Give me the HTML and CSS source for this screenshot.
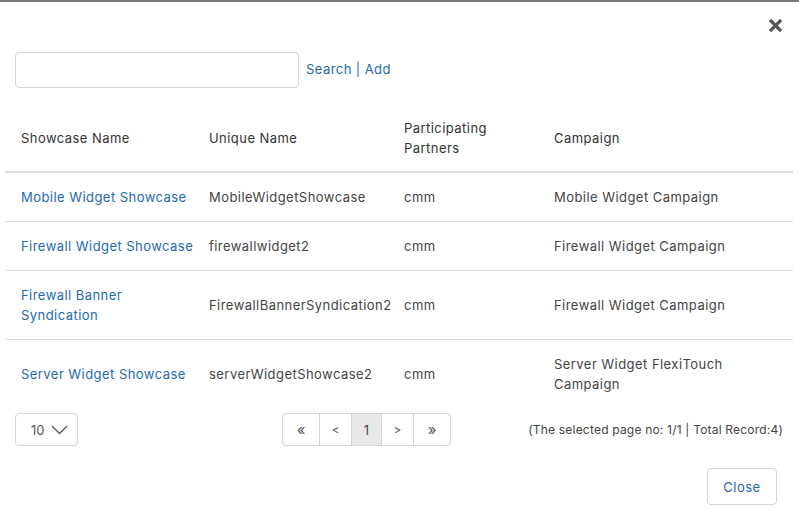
FILE: index.html
```html
<!DOCTYPE html>
<html lang="en">
<head>
    <meta charset="UTF-8">
    <meta name="viewport" content="width=device-width, initial-scale=1.0">
    <title>Showcases</title>
    <link rel="stylesheet" href="styles.css">
</head>
<body>
    <div class="modal">
        <div class="modal-header">
            <button class="close-x" aria-label="Close">
                <svg width="13" height="13" viewBox="0 0 13 13"><path d="M2 2 L11 11 M11 2 L2 11" stroke="#555" stroke-width="3.2" stroke-linecap="square"/></svg>
            </button>
        </div>

        <div class="search-bar">
            <input type="text" class="search-input">
            <a href="#">Search</a><span class="sep">|</span><a href="#">Add</a>
        </div>

        <table>
            <colgroup>
                <col class="c1"><col class="c2"><col class="c3"><col>
            </colgroup>
            <thead>
                <tr>
                    <th>Showcase Name</th>
                    <th>Unique Name</th>
                    <th>Participating<br>Partners</th>
                    <th>Campaign</th>
                </tr>
            </thead>
            <tbody>
                <tr>
                    <td><a href="#">Mobile Widget Showcase</a></td>
                    <td>MobileWidgetShowcase</td>
                    <td>cmm</td>
                    <td>Mobile Widget Campaign</td>
                </tr>
                <tr>
                    <td><a href="#">Firewall Widget Showcase</a></td>
                    <td>firewallwidget2</td>
                    <td>cmm</td>
                    <td>Firewall Widget Campaign</td>
                </tr>
                <tr>
                    <td><a href="#">Firewall Banner<br>Syndication</a></td>
                    <td>FirewallBannerSyndication2</td>
                    <td>cmm</td>
                    <td>Firewall Widget Campaign</td>
                </tr>
                <tr>
                    <td><a href="#">Server Widget Showcase</a></td>
                    <td>serverWidgetShowcase2</td>
                    <td>cmm</td>
                    <td>Server Widget FlexiTouch<br>Campaign</td>
                </tr>
            </tbody>
        </table>

        <div class="pager-row">
            <div class="page-size">10
                <svg width="17" height="10" viewBox="0 0 17 10"><path d="M1 1 L8.5 8.5 L16 1" fill="none" stroke="#555" stroke-width="1.3"/></svg>
            </div>
            <ul class="pagination">
                <li>&laquo;</li>
                <li>&lt;</li>
                <li class="active">1</li>
                <li>&gt;</li>
                <li>&raquo;</li>
            </ul>
            <div class="status">(The selected page no: 1/1 | Total Record:4)</div>
        </div>

        <div class="modal-footer">
            <button class="btn-close">Close</button>
        </div>
    </div>
</body>
</html>
```

FILE: styles.css
```css
body { margin: 0; padding: 0; background: #fff; font-family: Inter, "Open Sans", sans-serif; font-size: 13px; color: #444; letter-spacing: 0.45px; }
a { color: #1d6bb0; text-decoration: none; }
.modal { height: 518px; border-top: 2px solid #7a7a7a; box-sizing: border-box; }
.modal-header { display: flex; justify-content: flex-end; padding: 17px 17px 0 0; height: 34px; box-sizing: border-box; }
.close-x { background: none; border: none; padding: 0; width: 13px; height: 13px; cursor: pointer; }
.close-x svg { display: block; }
.search-bar { display: flex; align-items: center; padding: 16px 0 0 15px; line-height: 16px; }
.search-bar a { position: relative; top: -1px; }
.search-input { width: 284px; height: 36px; box-sizing: border-box; border: 1px solid #d4d4d4; border-radius: 4px; margin-right: 7px; }
.sep { color: #1d6bb0; margin: 0 4px; position: relative; top: -1px; }
table { margin: 20px 6px 0 5px; width: 788px; border-collapse: collapse; table-layout: fixed; }
col.c1 { width: 188px; }
col.c2 { width: 195px; }
col.c3 { width: 150px; }
th { text-align: left; font-weight: normal; color: #333; padding: 10px 0 13px 16px; line-height: 20px; height: 40px; }
td { padding: 14px 0 14px 16px; line-height: 20px; border-top: 1px solid #ddd; vertical-align: middle; white-space: nowrap; }
tbody tr:first-child td { border-top: 2px solid #ddd; }
.pager-row { display: flex; align-items: center; padding: 5px 16px 0 15px; }
.page-size { width: 63px; height: 33px; box-sizing: border-box; border: 1px solid #d4d4d4; border-radius: 4px; display: flex; align-items: center; gap: 6px; padding-left: 15px; color: #555; letter-spacing: 0; }
.pagination { list-style: none; margin: 0 0 0 204px; padding: 0; display: flex; border: 1px solid #d4d4d4; border-radius: 4px; height: 33px; box-sizing: border-box; letter-spacing: 0; }
.pagination li { box-sizing: border-box; width: 32px; display: flex; align-items: center; justify-content: center; border-left: 1px solid #d4d4d4; color: #555; font-size: 12px; }
.pagination li:first-child { border-left: none; width: 36px; font-size: 15px; }
.pagination li:last-child { width: 37px; font-size: 15px; }
.pagination li.active { background: #e8e8e8; width: 30px; color: #444; font-size: 13px; }
.status { margin-left: auto; font-size: 12px; color: #444; letter-spacing: 0.2px; }
.modal-footer { display: flex; justify-content: flex-end; padding: 22px 22px 0 0; }
.btn-close { width: 70px; height: 37px; background: #fff; border: 1px solid #d4d4d4; border-radius: 4px; color: #1d6bb0; font-family: inherit; font-size: 13px; letter-spacing: 0.5px; cursor: pointer; }
```
